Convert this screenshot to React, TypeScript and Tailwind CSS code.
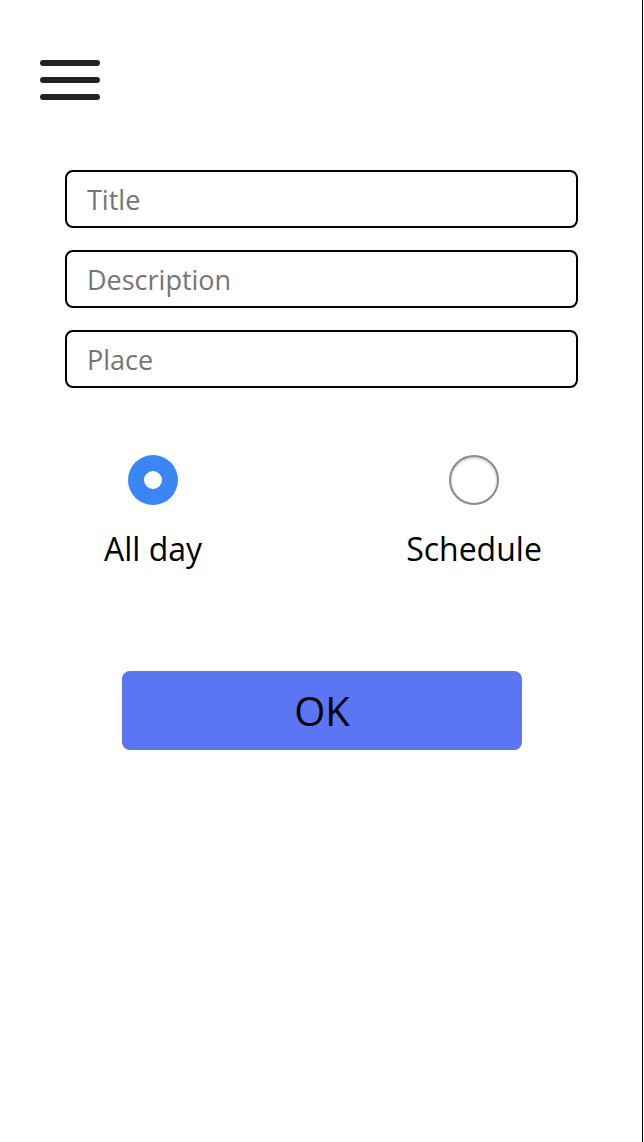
import { useState } from 'react';

function Radio({ checked }: { checked: boolean }) {
  return checked ? (
    <span className="flex h-[50px] w-[50px] items-center justify-center rounded-full bg-[#3a86f5]">
      <span className="h-[18px] w-[18px] rounded-full bg-white" />
    </span>
  ) : (
    <span className="h-[50px] w-[50px] rounded-full border-2 border-[#8a8a8a] bg-white shadow-[inset_0_1px_3px_rgba(0,0,0,0.25)]" />
  );
}

export default function App() {
  const [mode, setMode] = useState<'allday' | 'schedule'>('allday');

  return (
    <div className="min-h-screen w-[643px] border-r border-black bg-white font-['Open_Sans',sans-serif]">
      <div className="pl-10 pt-[60px]">
        <button className="flex w-[60px] flex-col gap-[11px]" aria-label="menu">
          <span className="h-[6px] w-[60px] rounded-full bg-[#222]" />
          <span className="h-[6px] w-[60px] rounded-full bg-[#222]" />
          <span className="h-[6px] w-[60px] rounded-full bg-[#222]" />
        </button>
      </div>

      <div className="mt-[70px] flex flex-col gap-[22px] pl-[65px]">
        {['Title', 'Description', 'Place'].map((p) => (
          <input
            key={p}
            placeholder={p}
            className="h-[58px] w-[513px] rounded-lg border-2 border-black px-5 text-[27px] text-black outline-none placeholder:text-[#757575]"
          />
        ))}
      </div>

      <div className="mt-[67px] flex gap-[161px] pl-[73px]">
        <label className="flex w-[160px] flex-col items-center gap-[28px]" onClick={() => setMode('allday')}>
          <Radio checked={mode === 'allday'} />
          <span className="text-[32px] leading-none text-black">All day</span>
        </label>
        <label className="flex w-[160px] flex-col items-center gap-[28px]" onClick={() => setMode('schedule')}>
          <Radio checked={mode === 'schedule'} />
          <span className="text-[32px] leading-none text-black">Schedule</span>
        </label>
      </div>

      <div className="mt-[106px] flex pl-[122px]">
        <button className="h-[79px] w-[400px] rounded-lg bg-[#5c75f2] text-[40px] text-black">OK</button>
      </div>
    </div>
  );
}
